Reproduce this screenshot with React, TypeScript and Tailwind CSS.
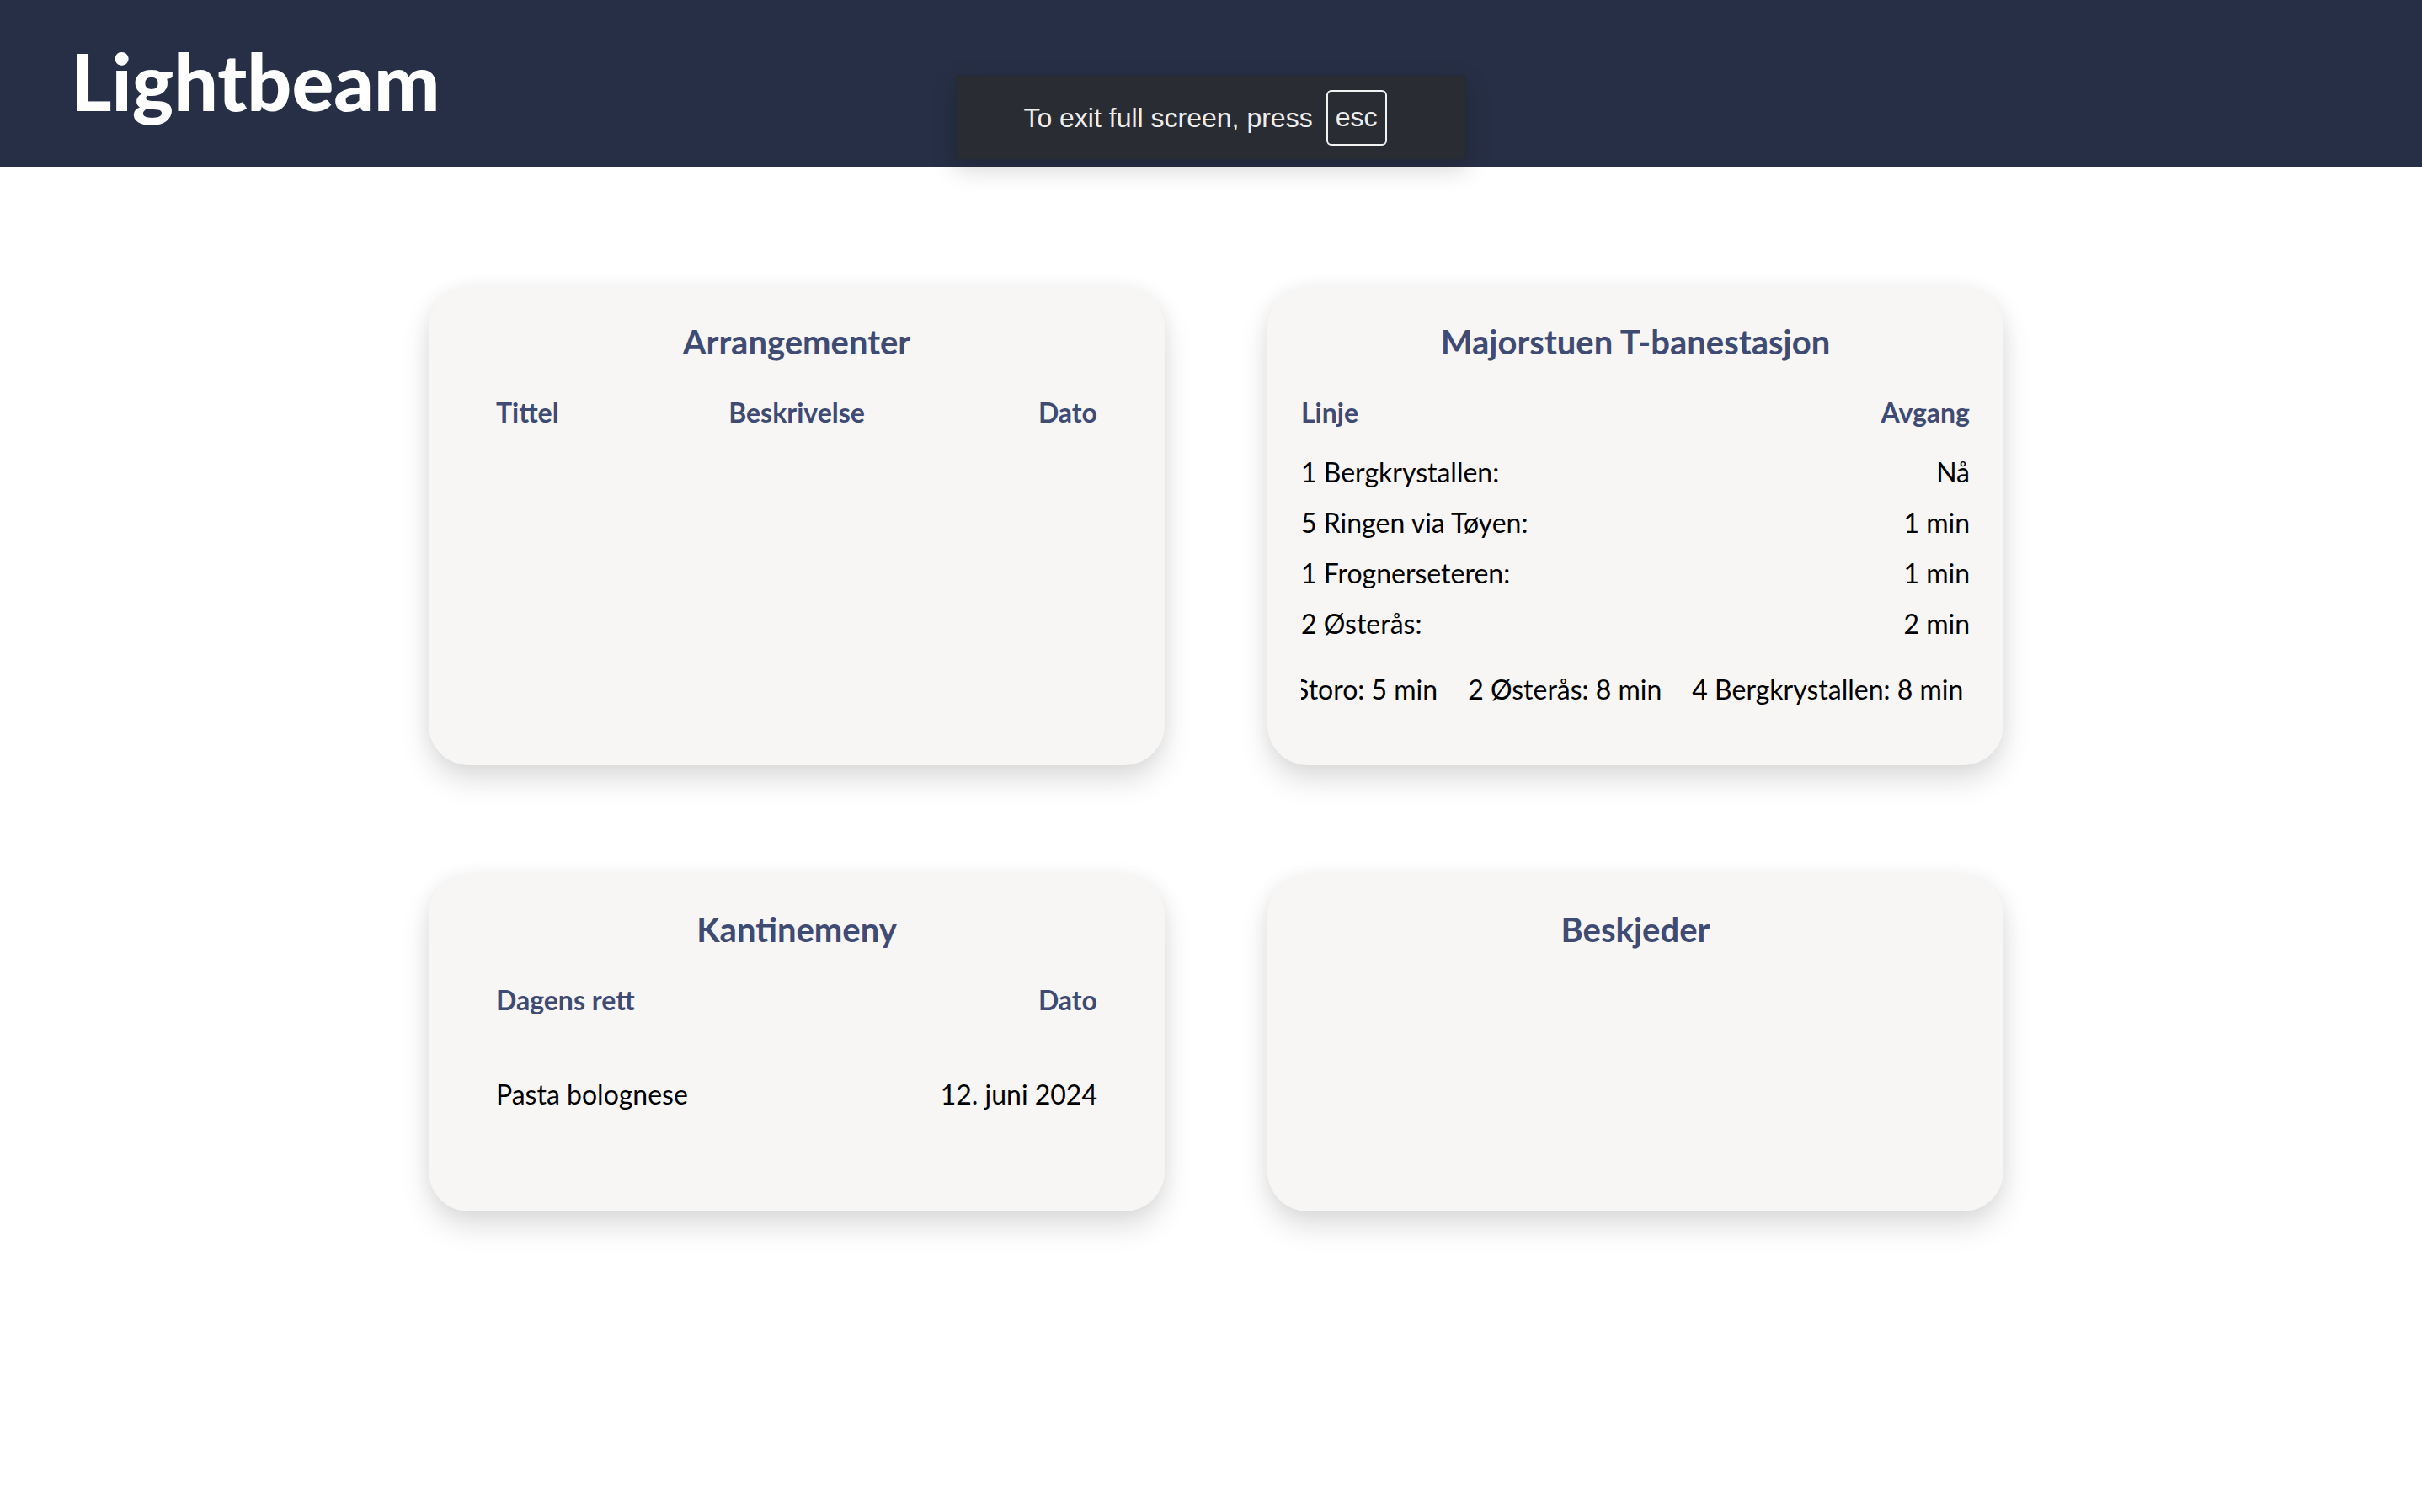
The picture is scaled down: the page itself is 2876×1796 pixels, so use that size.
import React from "react";

const headClr = "text-[#3f4b73]";

function Card({ className = "", children }: { className?: string; children: React.ReactNode }) {
  return (
    <div
      className={
        "rounded-[48px] bg-[#f7f6f5] pt-[45px] shadow-[0_18px_34px_rgba(0,0,0,0.13),0_0_22px_rgba(0,0,0,0.05)] " +
        className
      }
    >
      {children}
    </div>
  );
}

function CardTitle({ children }: { children: React.ReactNode }) {
  return <h2 className={"text-center text-[40px] leading-none font-bold " + headClr}>{children}</h2>;
}

const departures = [
  { line: "1 Bergkrystallen:", time: "Nå" },
  { line: "5 Ringen via Tøyen:", time: "1 min" },
  { line: "1 Frognerseteren:", time: "1 min" },
  { line: "2 Østerås:", time: "2 min" },
];

const ticker = ["Storo: 5 min", "2 Østerås: 8 min", "4 Bergkrystallen: 8 min"];

export default function App() {
  return (
    <div className="relative min-h-[1796px] bg-white font-['Lato',sans-serif] text-black">
      <header className="flex h-[198px] items-center bg-[#272f46] pl-[84px]">
        <h1 className="-mt-[5px] text-[93px] leading-none font-black text-white">Lightbeam</h1>
      </header>

      <div className="absolute top-[89px] left-1/2 flex h-[101px] w-[606px] -translate-x-1/2 items-center justify-center gap-[16px] border border-[#232a3a] bg-[#2a2c33] pr-[14px] shadow-[0_10px_28px_rgba(0,0,0,0.18)] font-['Liberation_Sans',Arial,sans-serif] text-[32px] text-[#ededed]">
        <span>To exit full screen, press</span>
        <span className="flex h-[66px] w-[72px] items-center justify-center rounded-[6px] border-2 border-[#f2f2f2] pb-[2px]">
          esc
        </span>
      </div>

      <main className="flex justify-center pt-[143px] pl-[12px]">
        <div className="grid grid-cols-[874px_874px] gap-x-[122px] gap-y-[130px]">
          <Card className="h-[568px] px-[80px]">
            <CardTitle>Arrangementer</CardTitle>
            <div className={"mt-[44px] grid grid-cols-3 text-[32px] leading-[40px] font-bold " + headClr}>
              <span className="text-left">Tittel</span>
              <span className="text-center">Beskrivelse</span>
              <span className="text-right">Dato</span>
            </div>
          </Card>

          <Card className="h-[568px] px-[40px]">
            <CardTitle>Majorstuen T-banestasjon</CardTitle>
            <div className={"mt-[44px] flex justify-between text-[32px] leading-[40px] font-bold " + headClr}>
              <span>Linje</span>
              <span>Avgang</span>
            </div>
            <div className="mt-[31px] flex flex-col gap-[20px] text-[32px] leading-[40px]">
              {departures.map((d) => (
                <div key={d.line} className="flex justify-between">
                  <span>{d.line}</span>
                  <span>{d.time}</span>
                </div>
              ))}
            </div>
            <div className="mt-[38px] overflow-hidden text-[32px] leading-[40px] whitespace-nowrap">
              <div className="-ml-[8px] flex gap-[36px]">
                {ticker.map((t) => (
                  <span key={t} className="shrink-0">
                    {t}
                  </span>
                ))}
              </div>
            </div>
          </Card>

          <Card className="h-[400px] px-[80px]">
            <CardTitle>Kantinemeny</CardTitle>
            <div className={"mt-[44px] flex justify-between text-[32px] leading-[40px] font-bold " + headClr}>
              <span>Dagens rett</span>
              <span>Dato</span>
            </div>
            <div className="mt-[72px] flex justify-between text-[32px] leading-[40px]">
              <span>Pasta bolognese</span>
              <span>12. juni 2024</span>
            </div>
          </Card>

          <Card className="h-[400px] px-[80px]">
            <CardTitle>Beskjeder</CardTitle>
          </Card>
        </div>
      </main>
    </div>
  );
}
